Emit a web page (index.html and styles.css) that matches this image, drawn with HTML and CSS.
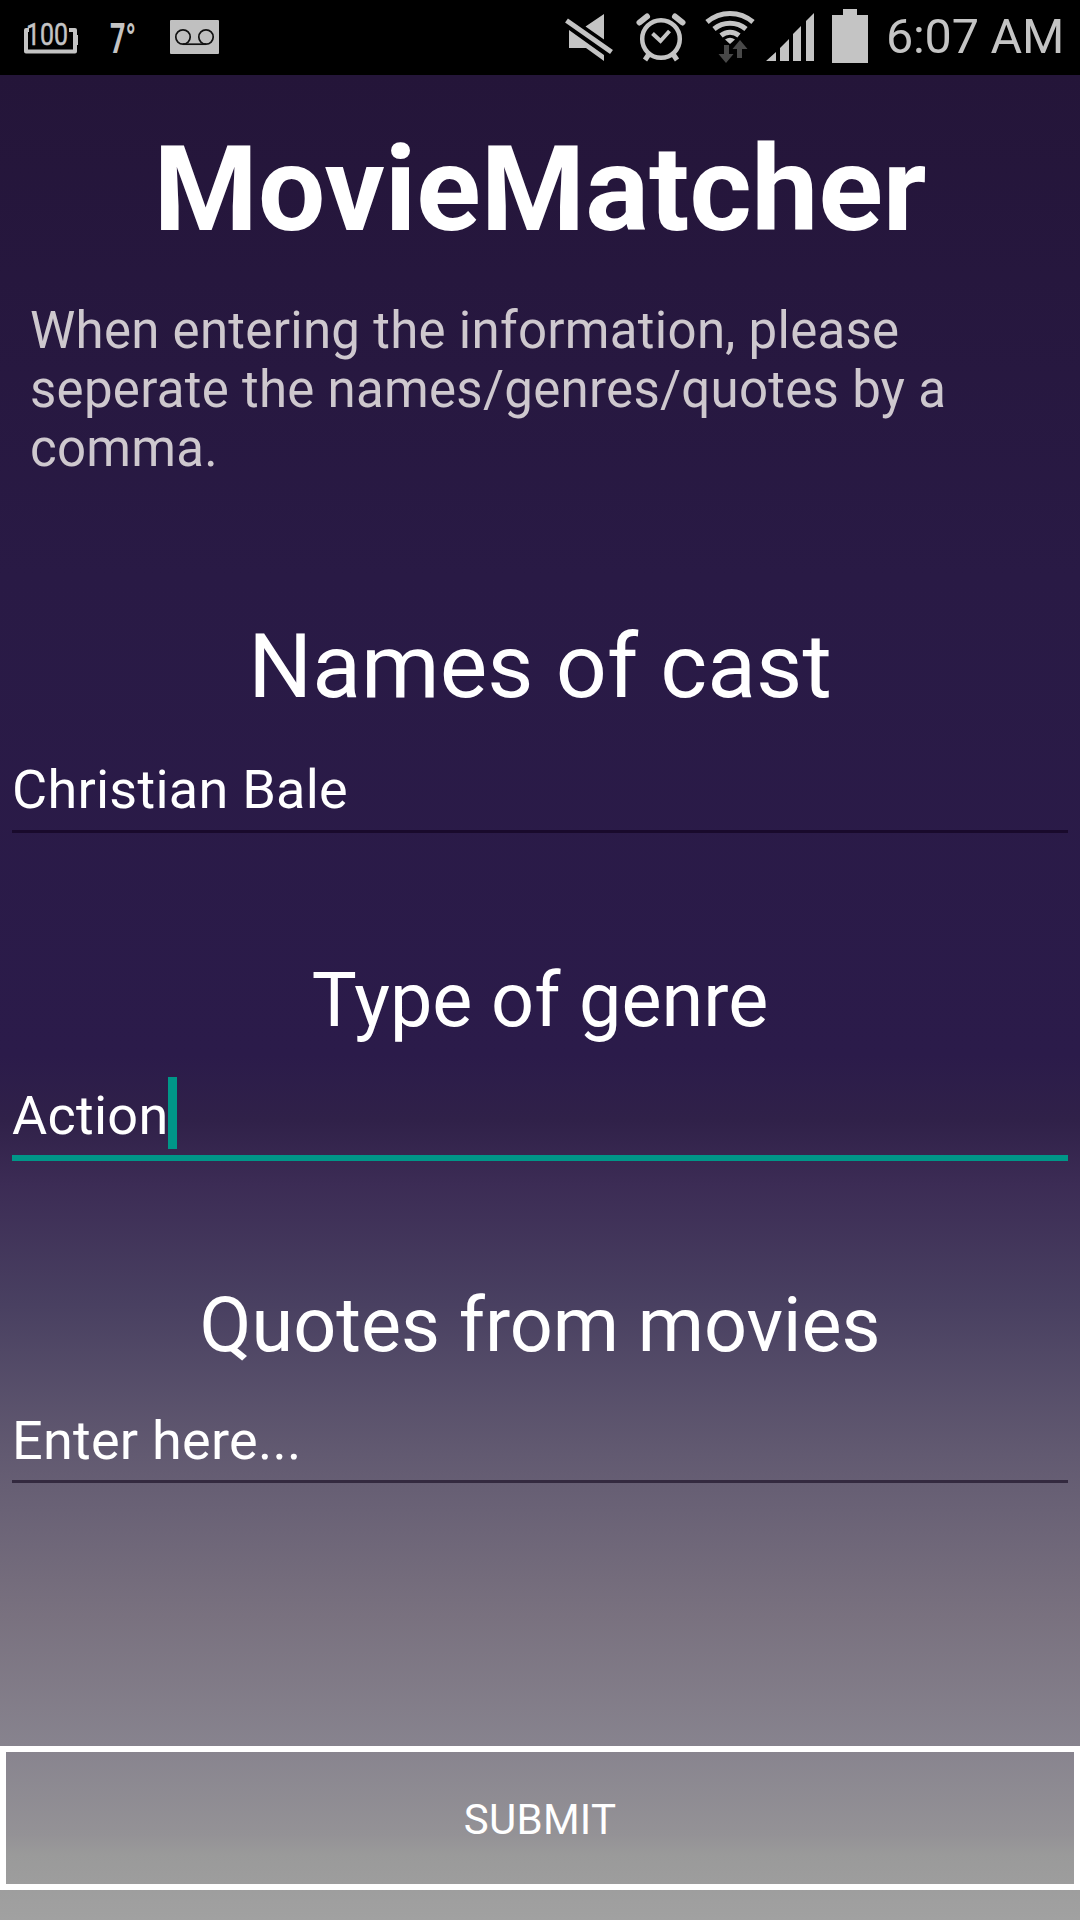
FILE: index.html
```html
<!DOCTYPE html>
<html lang="en">
<head>
<meta charset="utf-8">
<title>MovieMatcher</title>
<link rel="stylesheet" href="styles.css">
</head>
<body>
<header class="status">
  <svg class="status-icons" width="250" height="75" viewBox="0 0 250 75">
    <path d="M29 30h-3v21.500h49v-21.500h-6" fill="none" stroke="#c4c4c4" stroke-width="4" stroke-linejoin="round"/>
    <path d="M75 35h3v10h-3z" fill="#c4c4c4"/>
    <text x="26" y="44.500" class="battery-level" textLength="42" lengthAdjust="spacingAndGlyphs">100</text>
    <text x="110" y="52.500" class="temperature" textLength="26" lengthAdjust="spacingAndGlyphs">7°</text>
    <rect x="170" y="20" width="49" height="34" rx="1" fill="#c0c0c0"/>
    <g fill="none" stroke="#111" stroke-width="1.700"><circle cx="183" cy="37" r="7.200"/><circle cx="206" cy="37" r="7.200"/><path d="M183 44.200h23"/></g>
  </svg>
  <svg class="status-icons" width="330" height="75" viewBox="540 0 330 75" fill="#c4c4c4">
    <path d="M585.500 26.500 604 14v25.500zM569 30l35 25v6l-18-13h-17z"/>
    <path d="M566.500 20.500 611.500 52" stroke="#c4c4c4" stroke-width="5"/>
    <g fill="none" stroke="#c4c4c4"><circle cx="661" cy="39" r="18.800" stroke-width="4.500"/><path d="M652.500 33.500 660.500 41 669.500 31" stroke-width="4"/><path d="M639.500 22.500 647 16.500M682.500 22.500 675 16.500" stroke-width="6" stroke-linecap="round"/><path d="M649 54l-4 6M673 54l4 6" stroke-width="5"/></g>
    <g fill="none" stroke="#c4c4c4" stroke-width="5"><path d="M707 22a35 35 0 0 1 46 0M714 29a25 25 0 0 1 32 0M721 35.500a14 14 0 0 1 18 0"/></g>
    <path d="M725 39.500q5-3.500 10 0l-5 4.500z"/>
    <path d="M724 45h5v9h4.500l-7.500 9-7.500-9h5.500zM737 58v-9h-4.500l7.500-9 7.500 9H742v9z" fill="#484848"/>
    <path d="M766 61l10-9v9zM780 48l9-9v22h-9zM793 34l8-8v35h-8zM806 21l8-8v48h-8zM832 15h11V9h14v6h11v48h-36z"/>
  </svg>
  <span class="clock">6:07 AM</span>
</header>
<main class="app">
  <h1 class="title">MovieMatcher</h1>
  <p class="hint">When entering the information, please<br>seperate the names/genres/quotes by a<br>comma.</p>
  <h2 class="label label-cast">Names of cast</h2>
  <div class="field field-cast">Christian Bale</div>
  <h2 class="label label-genre">Type of genre</h2>
  <div class="field field-active"><span class="value">Action</span><span class="caret"></span></div>
  <h2 class="label label-quotes">Quotes from movies</h2>
  <div class="field field-quotes">Enter here...</div>
  <button class="submit">SUBMIT</button>
</main>
</body>
</html>
```
FILE: styles.css
```css
* { box-sizing: border-box; }
body {
  margin: 0;
  width: 1080px;
  height: 1920px;
  display: flex;
  flex-direction: column;
  font-family: Roboto, sans-serif;
  color: #fff;
  overflow: hidden;
}
.status {
  height: 75px;
  flex: none;
  display: flex;
  background: #000;
}
.status-icons { display: block; flex: none; }
.status-icons + .status-icons { margin-left: 290px; }
.battery-level { font-size: 32px; fill: #c4c4c4; stroke: #c4c4c4; stroke-width: .5px; }
.temperature { font-size: 42px; font-weight: 700; fill: #c4c4c4; }
.clock {
  margin-left: 16px;
  font-size: 48.500px;
  line-height: 74px;
  letter-spacing: -.2px;
  color: #c4c4c4;
  white-space: nowrap;
}
.app {
  flex: 1;
  display: flex;
  flex-direction: column;
  background: linear-gradient(#241539 0, #291a45 500px, #2b1b4a 980px, #302149 1045px, #3c2c55 1110px, #494061 1230px, #625a71 1380px, #79717f 1540px, #87838e 1670px, #949296 1760px, #9a9a9a 1780px, #a1a1a1 1845px);
}
.title {
  margin: 42px 0 0;
  height: 144px;
  font-size: 119.300px;
  line-height: 144px;
  text-align: center;
}
.hint {
  margin: 40px 0 0 30px;
  height: 177px;
  font-size: 51px;
  line-height: 59px;
  letter-spacing: .28px;
  color: #cec8ce;
  white-space: nowrap;
}
.label {
  margin: 0;
  font-weight: 400;
  text-align: center;
  white-space: nowrap;
}
.label-cast { margin-top: 136px; height: 106px; font-size: 89.700px; line-height: 106px; }
.label-genre { margin-top: 122px; height: 90px; font-size: 75.500px; line-height: 90px; }
.label-quotes { margin-top: 119px; height: 90px; font-size: 75.500px; line-height: 90px; }
.field {
  margin: 28px 12px 0;
  height: 85px;
  font-size: 54px;
  line-height: 84px;
  letter-spacing: .26px;
  border-bottom: 3px solid #190a2c;
  white-space: nowrap;
}
.field-active {
  margin-top: 31px;
  border-bottom: 6px solid #009688;
  display: flex;
  line-height: 79px;
}
.caret { margin-top: 1px; width: 9px; height: 72px; background: #009688; }
.field-quotes { line-height: 85px; border-bottom-color: #33293f; }
.submit {
  margin: 263px 0 0;
  padding: 4px 0 0;
  height: 144px;
  border: 6px solid #fff;
  background: none;
  color: #fff;
  font: 400 42px/1 Roboto, sans-serif;
  letter-spacing: .3px;
}
```
